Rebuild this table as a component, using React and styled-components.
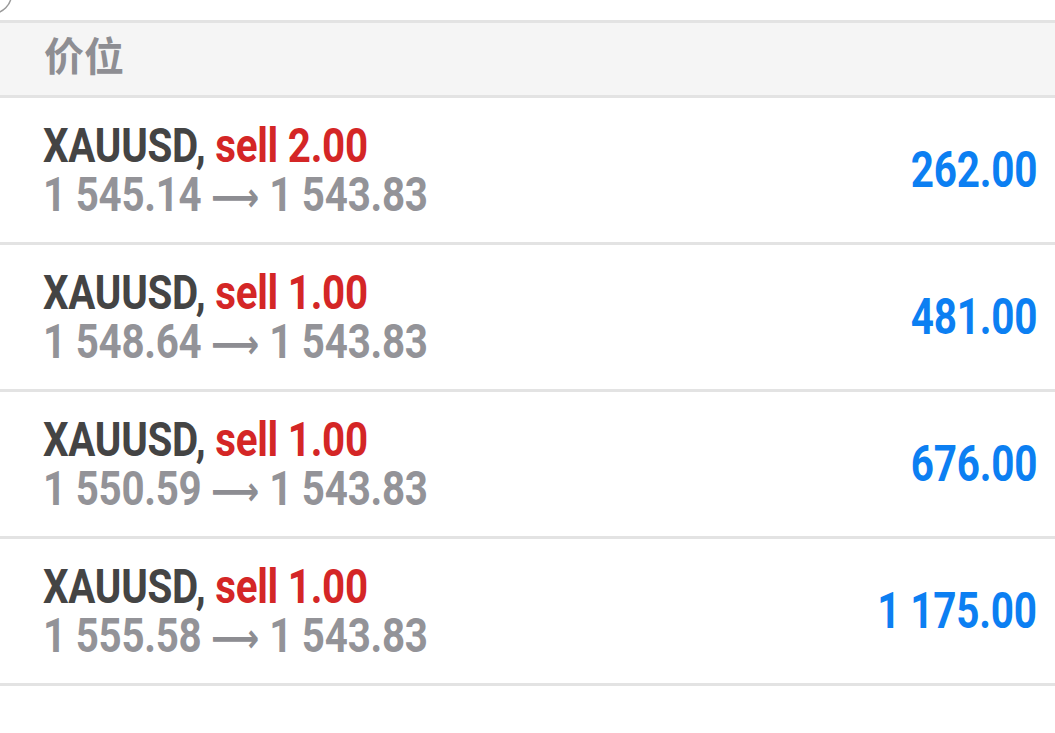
import React from "react";
import styled, { createGlobalStyle } from "styled-components";

const GlobalStyle = createGlobalStyle`
  html, body {
    margin: 0;
    padding: 0;
    background: #fff;
  }
  body {
    font-family: Roboto, "Noto Sans CJK SC", sans-serif;
  }
`;

const Page = styled.div`
  width: 1055px;
  height: 733px;
  overflow: hidden;
  background: #fff;
`;

const TopStrip = styled.div`
  position: relative;
  height: 20px;
`;

const Corner = styled.svg`
  position: absolute;
  left: 0;
  top: 0;
`;

const Header = styled.div`
  box-sizing: border-box;
  height: 78px;
  display: flex;
  align-items: center;
  padding: 0 0 10px 44px;
  background: #f5f5f5;
  border-top: 3px solid #e3e3e3;
  border-bottom: 3px solid #e3e3e3;
  color: #8e8e93;
  font-family: "Noto Sans CJK SC", sans-serif;
  font-weight: 700;
  font-size: 40px;
`;

const Row = styled.div`
  height: 144px;
  display: flex;
  align-items: center;
  justify-content: space-between;
  padding: 0 18px 0 43px;
  border-bottom: 3px solid #e3e3e3;
`;

const Left = styled.div`
  display: flex;
  flex-direction: column;
`;

const Condensed = styled.div`
  font-family: Roboto, sans-serif;
  font-weight: 700;
  font-size: ${(p) => p.$size || 48}px;
  line-height: 49px;
  white-space: nowrap;
  transform: scaleX(${(p) => p.$scale || 0.84});
  transform-origin: ${(p) => (p.$right ? "right" : "left")} center;
  letter-spacing: -0.3px;
`;

const Symbol = styled.span`
  color: #444;
`;

const Side = styled.span`
  color: #d42626;
`;

const Prices = styled(Condensed)`
  color: #939398;
`;

const Arrow = styled.span`
  font-family: "DejaVu Sans", sans-serif;
  font-weight: 700;
  font-size: 40px;
  line-height: 1;
  letter-spacing: 0;
  color: #8d8d92;
`;

const Profit = styled(Condensed)`
  color: #0c7ff2;
`;

const trades = [
  { side: "sell 2.00", open: "1 545.14", close: "1 543.83", profit: "262.00" },
  { side: "sell 1.00", open: "1 548.64", close: "1 543.83", profit: "481.00" },
  { side: "sell 1.00", open: "1 550.59", close: "1 543.83", profit: "676.00" },
  { side: "sell 1.00", open: "1 555.58", close: "1 543.83", profit: "1 175.00" },
];

export default function App() {
  return (
    <Page>
      <GlobalStyle />
      <TopStrip>
        <Corner width="20" height="20" viewBox="0 0 20 20">
          <circle cx="-8" cy="-6" r="19.5" fill="none" stroke="#9a9a9a" strokeWidth="1.5" />
        </Corner>
      </TopStrip>
      <Header>价位</Header>
      {trades.map((t, i) => (
        <Row key={i}>
          <Left>
            <Condensed>
              <Symbol>XAUUSD,</Symbol> <Side>{t.side}</Side>
            </Condensed>
            <Prices>
              {t.open} <Arrow>⟶</Arrow> {t.close}
            </Prices>
          </Left>
          <Profit $right $size={50} $scale={0.81}>
            {t.profit}
          </Profit>
        </Row>
      ))}
    </Page>
  );
}
